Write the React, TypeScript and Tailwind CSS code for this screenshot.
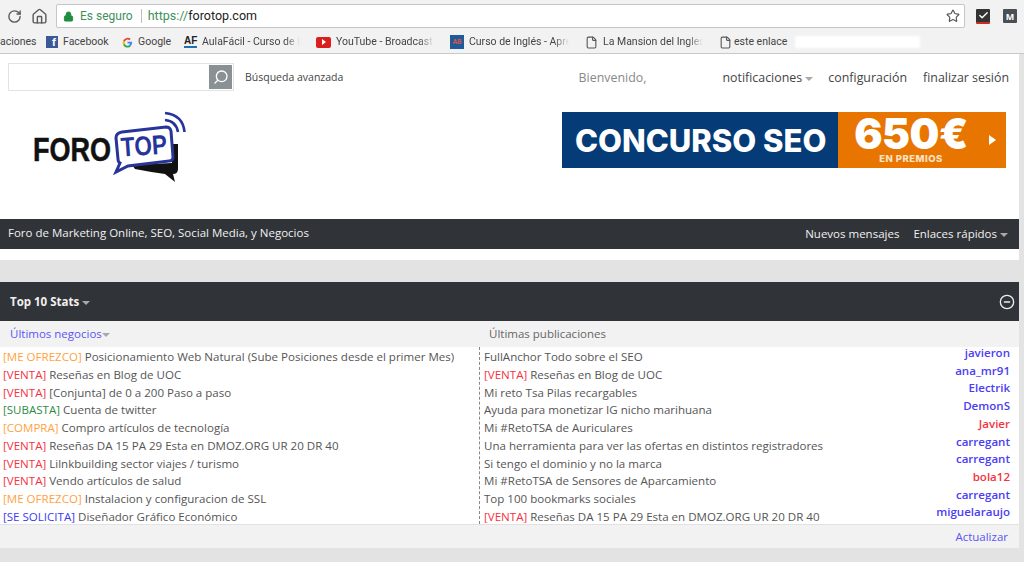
import { RotateCw, Home, Lock, Star, Search, CircleMinus, File, Check } from 'lucide-react';

const negocios = [
  { tag: '[ME OFREZCO]', color: 'text-[#ffa23f]', text: 'Posicionamiento Web Natural (Sube Posiciones desde el primer Mes)' },
  { tag: '[VENTA]', color: 'text-[#f5333f]', text: 'Reseñas en Blog de UOC' },
  { tag: '[VENTA]', color: 'text-[#f5333f]', text: '[Conjunta] de 0 a 200 Paso a paso' },
  { tag: '[SUBASTA]', color: 'text-[#2f8a45]', text: 'Cuenta de twitter' },
  { tag: '[COMPRA]', color: 'text-[#ffa23f]', text: 'Compro artículos de tecnología' },
  { tag: '[VENTA]', color: 'text-[#f5333f]', text: 'Reseñas DA 15 PA 29 Esta en DMOZ.ORG UR 20 DR 40' },
  { tag: '[VENTA]', color: 'text-[#f5333f]', text: 'Lilnkbuilding sector viajes / turismo' },
  { tag: '[VENTA]', color: 'text-[#f5333f]', text: 'Vendo artículos de salud' },
  { tag: '[ME OFREZCO]', color: 'text-[#ffa23f]', text: 'Instalacion y configuracion de SSL' },
  { tag: '[SE SOLICITA]', color: 'text-[#3b3bf0]', text: 'Diseñador Gráfico Económico' },
];

const publicaciones = [
  { text: 'FullAnchor Todo sobre el SEO' },
  { tag: '[VENTA]', text: 'Reseñas en Blog de UOC' },
  { text: 'Mi reto Tsa Pilas recargables' },
  { text: 'Ayuda para monetizar IG nicho marihuana' },
  { text: 'Mi #RetoTSA de Auriculares' },
  { text: 'Una herramienta para ver las ofertas en distintos registradores' },
  { text: 'Si tengo el dominio y no la marca' },
  { text: 'Mi #RetoTSA de Sensores de Aparcamiento' },
  { text: 'Top 100 bookmarks sociales' },
  { tag: '[VENTA]', text: 'Reseñas DA 15 PA 29 Esta en DMOZ.ORG UR 20 DR 40' },
];

const usuarios = [
  { name: 'javieron', color: 'text-[#4a3df5]' },
  { name: 'ana_mr91', color: 'text-[#4a3df5]' },
  { name: 'Electrik', color: 'text-[#4a3df5]' },
  { name: 'DemonS', color: 'text-[#4a3df5]' },
  { name: 'Javier', color: 'text-[#f5333f]' },
  { name: 'carregant', color: 'text-[#4a3df5]' },
  { name: 'carregant', color: 'text-[#4a3df5]' },
  { name: 'bola12', color: 'text-[#f5333f]' },
  { name: 'carregant', color: 'text-[#4a3df5]' },
  { name: 'miguelaraujo', color: 'text-[#4a3df5]' },
];

function Caret() {
  return <span className="inline-block w-0 h-0 border-l-[4px] border-r-[4px] border-t-[4px] border-l-transparent border-r-transparent border-t-[#a8a8a8] align-middle" />;
}

function Logo() {
  return (
    <svg width="155" height="75" viewBox="33 110 155 75" className="block">
      <text x="33" y="161.5" textLength="78" lengthAdjust="spacingAndGlyphs" fontFamily="'Liberation Sans', sans-serif" fontSize="33" fontWeight="700" fill="#111" stroke="#111" strokeWidth="0.5">FORO</text>
      <path d="M178 145 L178 170 Q178 175 173 175 L175 183 L165 175 Q150 173 135 170 L132 166 L172 164 L172 145 Z" fill="#111" />
      <path d="M122 133 L166 128 Q170 128 171 132 L173 158 Q173 162 169 162 L128 167 L116 173 L120 164 Q118 163 118 160 L116 139 Q116 134 122 133 Z" fill="#fff" stroke="#27349a" strokeWidth="3" />
      <text x="121" y="156" textLength="46" lengthAdjust="spacingAndGlyphs" fontFamily="'Liberation Sans', sans-serif" fontSize="27" fontWeight="700" fill="#27349a" transform="rotate(-4 144 148)">TOP</text>
      <path d="M165 114 Q183 116 184.500 133" fill="none" stroke="#27349a" strokeWidth="2.6" />
      <path d="M165 121 Q176 122 178 133" fill="none" stroke="#27349a" strokeWidth="2.6" />
    </svg>
  );
}

function Banner() {
  return (
    <div className="w-[444px] h-[56px] mt-[2px] shrink-0 flex font-['Inter',sans-serif] text-white">
      <div className="w-[276px] bg-[#053c78] flex items-center pl-[13px] font-extrabold text-[31px] leading-none whitespace-nowrap">CONCURSO SEO</div>
      <div className="flex-1 bg-[#e87500] flex items-center">
        <div className="w-[146px] flex flex-col items-center">
          <span className="font-black text-[42px] leading-[38px] tracking-[-0.5px]">650€</span>
          <span className="font-extrabold text-[9.5px] leading-[12px] tracking-[0.5px] text-[#fde3c4]">EN PREMIOS</span>
        </div>
        <span className="ml-[5px] w-0 h-0 border-y-[5px] border-l-[7px] border-y-transparent border-l-white" />
      </div>
    </div>
  );
}

function Bookmark({ icon, label, width, fade }: { icon: React.ReactNode; label: string; width: string; fade?: boolean }) {
  return (
    <div className={`flex items-center gap-[5px] shrink-0 pr-[16px] ${width}`}>
      {icon}
      <span className={`whitespace-nowrap min-w-0 ${fade ? '[mask-image:linear-gradient(to_right,black_85%,transparent)] overflow-hidden flex-1' : ''}`}>{label}</span>
    </div>
  );
}

export default function App() {
  return (
    <div className="w-[1024px] h-[562px] overflow-hidden bg-[#e3e3e3] font-['Open_Sans',sans-serif]">
      {/* barra del navegador */}
      <div className="h-[32px] bg-[#f2f2f2] flex items-center">
        <RotateCw size={15} className="ml-[7px] text-[#5a5a5a]" strokeWidth={2.2} />
        <Home size={17} className="ml-[9px] text-[#5a5a5a]" strokeWidth={2} />
        <div className="ml-[8px] w-[909px] h-[24px] bg-white border border-[#c6c6c6] rounded-[2px] flex items-center text-[12px] font-['Roboto',sans-serif]">
          <Lock size={11} className="ml-[6px] text-[#1e8e3e]" fill="#1e8e3e" />
          <span className="ml-[6px] text-[#3f8f5c]">Es seguro</span>
          <span className="ml-[8px] w-px h-[14px] bg-[#c0c0c0]" />
          <span className="ml-[6px] text-[12.5px] text-[#222]"><span className="text-[#3f8f5c]">https://</span>forotop.com</span>
          <Star size={14} className="ml-auto mr-[4px] text-[#555]" strokeWidth={2} />
        </div>
        <div className="ml-[11px] w-[14px] h-[15px] rounded-[1px] bg-[#333] flex items-center justify-center border-b-2 border-b-[#c8301e]">
          <Check size={11} className="text-white" strokeWidth={3} />
        </div>
        <div className="ml-[13px] w-[14px] h-[14px] rounded-[1px] bg-[#4a4f55] flex items-center justify-center text-white text-[9px] font-bold leading-none">M</div>
      </div>
      {/* marcadores */}
      <div className="h-[22px] pb-[1px] bg-[#f2f2f2] border-b border-[#c9c9c9] flex items-center text-[10.5px] text-[#444] font-['Roboto',sans-serif]">
        <span className="w-[46px] shrink-0">aciones</span>
        <Bookmark width="w-[76px]" label="Facebook" icon={<span className="w-[12px] h-[12px] bg-[#3b5998] text-white text-[11px] font-bold leading-[13px] text-right pr-[2px] shrink-0">f</span>} />
        <Bookmark width="w-[62px]" label="Google" icon={<svg width="11" height="11" viewBox="0 0 24 24" className="shrink-0"><path d="M22 12.200c0-.7-.1-1.400-.2-2H12v4h5.600c-.3 1.300-1 2.400-2.100 3.100v2.600h3.400c2-1.800 3.100-4.500 3.100-7.700z" fill="#4285f4" /><path d="M12 23c2.800 0 5.200-.9 6.900-2.500l-3.400-2.600c-.9.600-2.100 1-3.500 1-2.700 0-5-1.800-5.800-4.300H2.700v2.700C4.500 20.700 8 23 12 23z" fill="#34a853" /><path d="M6.200 14.600a6.600 6.600 0 0 1 0-4.200V7.700H2.700a11 11 0 0 0 0 9.600z" fill="#fbbc05" /><path d="M12 5.400c1.500 0 2.900.5 4 1.500l3-3A11 11 0 0 0 2.700 7.700l3.500 2.700C7 7.900 9.300 5.400 12 5.400z" fill="#ea4335" /></svg>} />
        <Bookmark width="w-[132px]" fade label="AulaFácil - Curso de Inglés" icon={<span className="w-[13px] h-[12px] text-[10px] font-bold leading-[10px] text-[#222] border-b-2 border-[#1f6fb2] shrink-0 font-['Liberation_Sans',sans-serif]">AF</span>} />
        <Bookmark width="w-[134px]" fade label="YouTube - Broadcast Yourself" icon={<span className="w-[15px] h-[11px] bg-[#d9201f] rounded-[2px] flex items-center justify-center shrink-0"><span className="w-0 h-0 border-y-[3px] border-l-[4px] border-y-transparent border-l-white" /></span>} />
        <Bookmark width="w-[135px]" fade label="Curso de Inglés - Aprende" icon={<span className="w-[14px] h-[14px] bg-[#1d5c96] flex items-center justify-center text-[#e05050] text-[7px] font-bold shrink-0">AB</span>} />
        <Bookmark width="w-[134px]" fade label="La Mansion del Ingles" icon={<File size={13} className="shrink-0 text-[#555]" />} />
        <div className="w-[76px] shrink-0 flex items-center gap-[2px] whitespace-nowrap"><File size={13} className="shrink-0 text-[#555]" />este enlace</div>
        <div className="w-[125px] h-[12px] bg-white rounded-[2px] blur-[1px]" />
      </div>
      {/* cabecera del foro */}
      <div className="w-[1019px] bg-white">
        <div className="h-[165px] flex flex-col">
          <div className="h-[28px] mt-[9px] flex items-center whitespace-nowrap">
            <div className="ml-[8px] w-[226px] h-[28px] shrink-0 border border-[#e3e3e3] flex items-center justify-end pr-[1px]">
              <span className="w-[23px] h-[24px] bg-[#8a9195] flex items-center justify-center">
                <Search size={16} className="text-white -scale-x-100" strokeWidth={2} />
              </span>
            </div>
            <span className="ml-[11px] mt-[1px] text-[10.5px] text-[#444]">Búsqueda avanzada</span>
            <div className="ml-auto mt-[3px] pr-[10px] flex items-center text-[12.4px] text-[#444]">
              <span className="mr-[76px] text-[#888]">Bienvenido,</span>
              <span>notificaciones <Caret /></span>
              <span className="ml-[15px]">configuración</span>
              <span className="ml-[16px]">finalizar sesión</span>
            </div>
          </div>
          <div className="mt-[19px] flex items-start justify-between pl-[33px] pr-[13px]">
            <div className="-mt-[1px]"><Logo /></div>
            <Banner />
          </div>
        </div>
        <div className="h-[30px] bg-[#303438] flex items-center justify-between pl-[8px] pr-[11px] text-[#f0f0f0] whitespace-nowrap">
          <span className="text-[11.5px] -mt-[3px]">Foro de Marketing Online, SEO, Social Media, y Negocios</span>
          <div className="flex items-center gap-[14px] text-[11.5px]">
            <span>Nuevos mensajes</span>
            <span>Enlaces rápidos <Caret /></span>
          </div>
        </div>
        <div className="h-[11px] bg-white" />
      </div>
      <div className="h-[22px]" />
      {/* top 10 */}
      <div className="w-[1019px]">
        <div className="h-[39px] bg-[#303438] flex items-center justify-between pl-[10px] pr-[4px] text-[#f0f0f0]">
          <span className="text-[11.5px] font-bold">Top 10 Stats <Caret /></span>
          <CircleMinus size={16} strokeWidth={2} className="text-[#eee]" />
        </div>
        <div className="h-[26px] bg-[#f2f2f2] flex items-center text-[11.5px]">
          <div className="w-[489px] pl-[10px] text-[#5a55f5]">Últimos negocios<Caret /></div>
          <div className="text-[#666]">Últimas publicaciones</div>
        </div>
        <div className="h-[177px] bg-white flex text-[11.55px] leading-[17.78px] text-[#555] overflow-hidden">
          <div className="w-[479px] pl-[3px] pt-[1px] shrink-0">
            {negocios.map((n, i) => (
              <div key={i} className="whitespace-nowrap"><span className={n.color}>{n.tag}</span> {n.text}</div>
            ))}
          </div>
          <div className="flex-1 border-l border-dashed border-[#888] pl-[4px] pt-[1px]">
            {publicaciones.map((p, i) => (
              <div key={i} className="whitespace-nowrap">{p.tag && <span className="text-[#f5333f]">{p.tag} </span>}{p.text}</div>
            ))}
          </div>
          <div className="pr-[9px] -mt-[3px] text-right font-semibold leading-[17.7px]">
            {usuarios.map((u, i) => (
              <div key={i} className={u.color}>{u.name}</div>
            ))}
          </div>
        </div>
        <div className="h-[24px] bg-[#f2f2f2] border-t border-[#e2e2e2] flex items-center justify-end pr-[11px] text-[11.5px] text-[#5a55f5]">Actualizar</div>
      </div>
    </div>
  );
}
